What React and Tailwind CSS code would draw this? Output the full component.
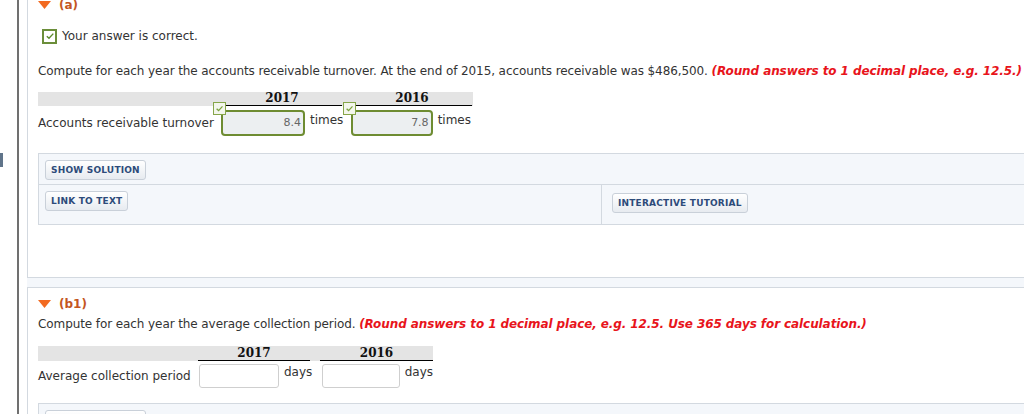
import React from "react";

const CheckMark = ({ size = 10, stroke = "#5b8a2b" }) => (
  <svg width={size} height={size} viewBox="0 0 10 10">
    <path d="M1.8 5.2 L4 7.3 L8.3 2.6" fill="none" stroke={stroke} strokeWidth="1.4" />
  </svg>
);

const Heading = ({ label, className }) => (
  <div className={`flex items-center h-[16px] ${className}`}>
    <svg width="13" height="8" viewBox="0 0 13 8" className="mr-[8px]">
      <polygon points="0,0 13,0 6.5,8" fill="#f26a21" />
    </svg>
    <span className="font-bold text-[12px] text-[#c4561f]">{label}</span>
  </div>
);

const ActionButton = ({ children }) => (
  <button className="h-[20px] px-[5px] rounded-[3px] border border-[#c9d0d9] bg-gradient-to-b from-white to-[#e7ebf0] text-[9px] font-bold text-[#2d4b7a] leading-none tracking-[0.2px]">
    {children}
  </button>
);

const ActionBox = () => (
  <div className="mr-[-2px] border border-[#d3d9e0] bg-[#f4f7fb]">
    <div className="h-[31px] pl-[6px] pt-[6px] border-b border-[#d3d9e0]">
      <ActionButton>SHOW SOLUTION</ActionButton>
    </div>
    <div className="flex h-[39px]">
      <div className="w-[563px] pl-[6px] pt-[6px] border-r border-[#d3d9e0]">
        <ActionButton>LINK TO TEXT</ActionButton>
      </div>
      <div className="flex-1 pl-[10px] pt-[8px]">
        <ActionButton>INTERACTIVE TUTORIAL</ActionButton>
      </div>
    </div>
  </div>
);

const AnswerCell = ({ value, unit, width }) => (
  <div className={`relative flex items-start ${width}`}>
    <div className="absolute left-[-8px] top-[-8px] w-[13px] h-[13px] border border-[#86a64a] bg-[#f3f6ec] flex items-center justify-center">
      <CheckMark size={9} stroke="#7aa23c" />
    </div>
    <div className="w-[84px] h-[26px] rounded-[4px] border-2 border-[#6e8c32] bg-[#eceff1] flex items-center justify-end pr-[2px] text-[11px] text-[#666]">
      {value}
    </div>
    <span className="ml-[5px] pt-[2px] text-[12px] text-[#333]">{unit}</span>
  </div>
);

const EmptyCell = ({ unit, width }) => (
  <div className={`flex items-start ${width}`}>
    <div className="w-[80px] h-[24px] rounded-[3px] border border-[#cfcfcf] bg-white" />
    <span className="ml-[5px] text-[12px] text-[#333]">{unit}</span>
  </div>
);

export default function App() {
  return (
    <div className="w-[1024px] h-[414px] overflow-hidden bg-white flex font-['DejaVu_Sans','Liberation_Sans',sans-serif] text-[12px] leading-[16px] text-[#333]">
      <div className="w-[17px] shrink-0 pt-[153px]">
        <div className="w-[3px] h-[14px] bg-[#60748a]" />
      </div>
      <div className="w-[2px] shrink-0 bg-[#707070]" />
      <div className="flex-1 min-w-0 pl-[8px]">
        {/* part (a) */}
        <section className="border-l border-b border-[#d3d9e0] bg-white pl-[10px] pb-[52px]">
          <Heading label="(a)" className="-mt-[3px]" />
          <div className="flex items-center mt-[15px] ml-[4px]">
            <div className="w-[15px] h-[15px] border-2 border-[#6b8e3a] bg-white flex items-center justify-center">
              <CheckMark size={10} />
            </div>
            <span className="ml-[5px]">Your answer is correct.</span>
          </div>
          <p className="mt-[19px] whitespace-nowrap tracking-[-0.09px]">
            Compute for each year the accounts receivable turnover. At the end of 2015, accounts receivable was $486,500.{" "}
            <span className="font-bold italic text-[#e8141b]">(Round answers to 1 decimal place, e.g. 12.5.)</span>
          </p>
          <div className="mt-[13px] w-[435px]">
            <div className="flex h-[14px] bg-[#e4e4e4] font-['DejaVu_Serif',serif] font-bold text-[12px] leading-[13px] text-[#111]">
              <div className="w-[184px]" />
              <div className="w-[120px] text-center border-b border-black">2017</div>
              <div className="w-[10px]" />
              <div className="w-[120px] text-center border-b border-black">2016</div>
            </div>
            <div className="flex items-start pt-[4px]">
              <div className="w-[183px] pt-[5px]">Accounts receivable turnover</div>
              <AnswerCell value="8.4" unit="times" width="w-[130px]" />
              <AnswerCell value="7.8" unit="times" width="w-[120px]" />
            </div>
          </div>
          <div className="mt-[17px]">
            <ActionBox />
          </div>
        </section>

        <div className="h-[9px] bg-[#f4f7fb]" />

        {/* part (b1) */}
        <section className="border-l border-t border-[#d3d9e0] bg-white pl-[10px]">
          <Heading label="(b1)" className="mt-[8px]" />
          <p className="mt-[4px] whitespace-nowrap tracking-[-0.09px]">
            Compute for each year the average collection period.{" "}
            <span className="font-bold italic text-[#e8141b]">
              (Round answers to 1 decimal place, e.g. 12.5. Use 365 days for calculation.)
            </span>
          </p>
          <div className="mt-[14px] w-[395px]">
            <div className="flex h-[15px] bg-[#e4e4e4] font-['DejaVu_Serif',serif] font-bold text-[12px] leading-[14px] text-[#111]">
              <div className="w-[160px]" />
              <div className="w-[112px] text-center border-b border-black">2017</div>
              <div className="w-[10px]" />
              <div className="w-[113px] text-center border-b border-black">2016</div>
            </div>
            <div className="flex items-start pt-[3px]">
              <div className="w-[161px] pt-[4px]">Average collection period</div>
              <EmptyCell unit="days" width="w-[123px]" />
              <EmptyCell unit="days" width="w-[111px]" />
            </div>
          </div>
          <div className="mt-[15px]">
            <ActionBox />
          </div>
        </section>
      </div>
    </div>
  );
}
